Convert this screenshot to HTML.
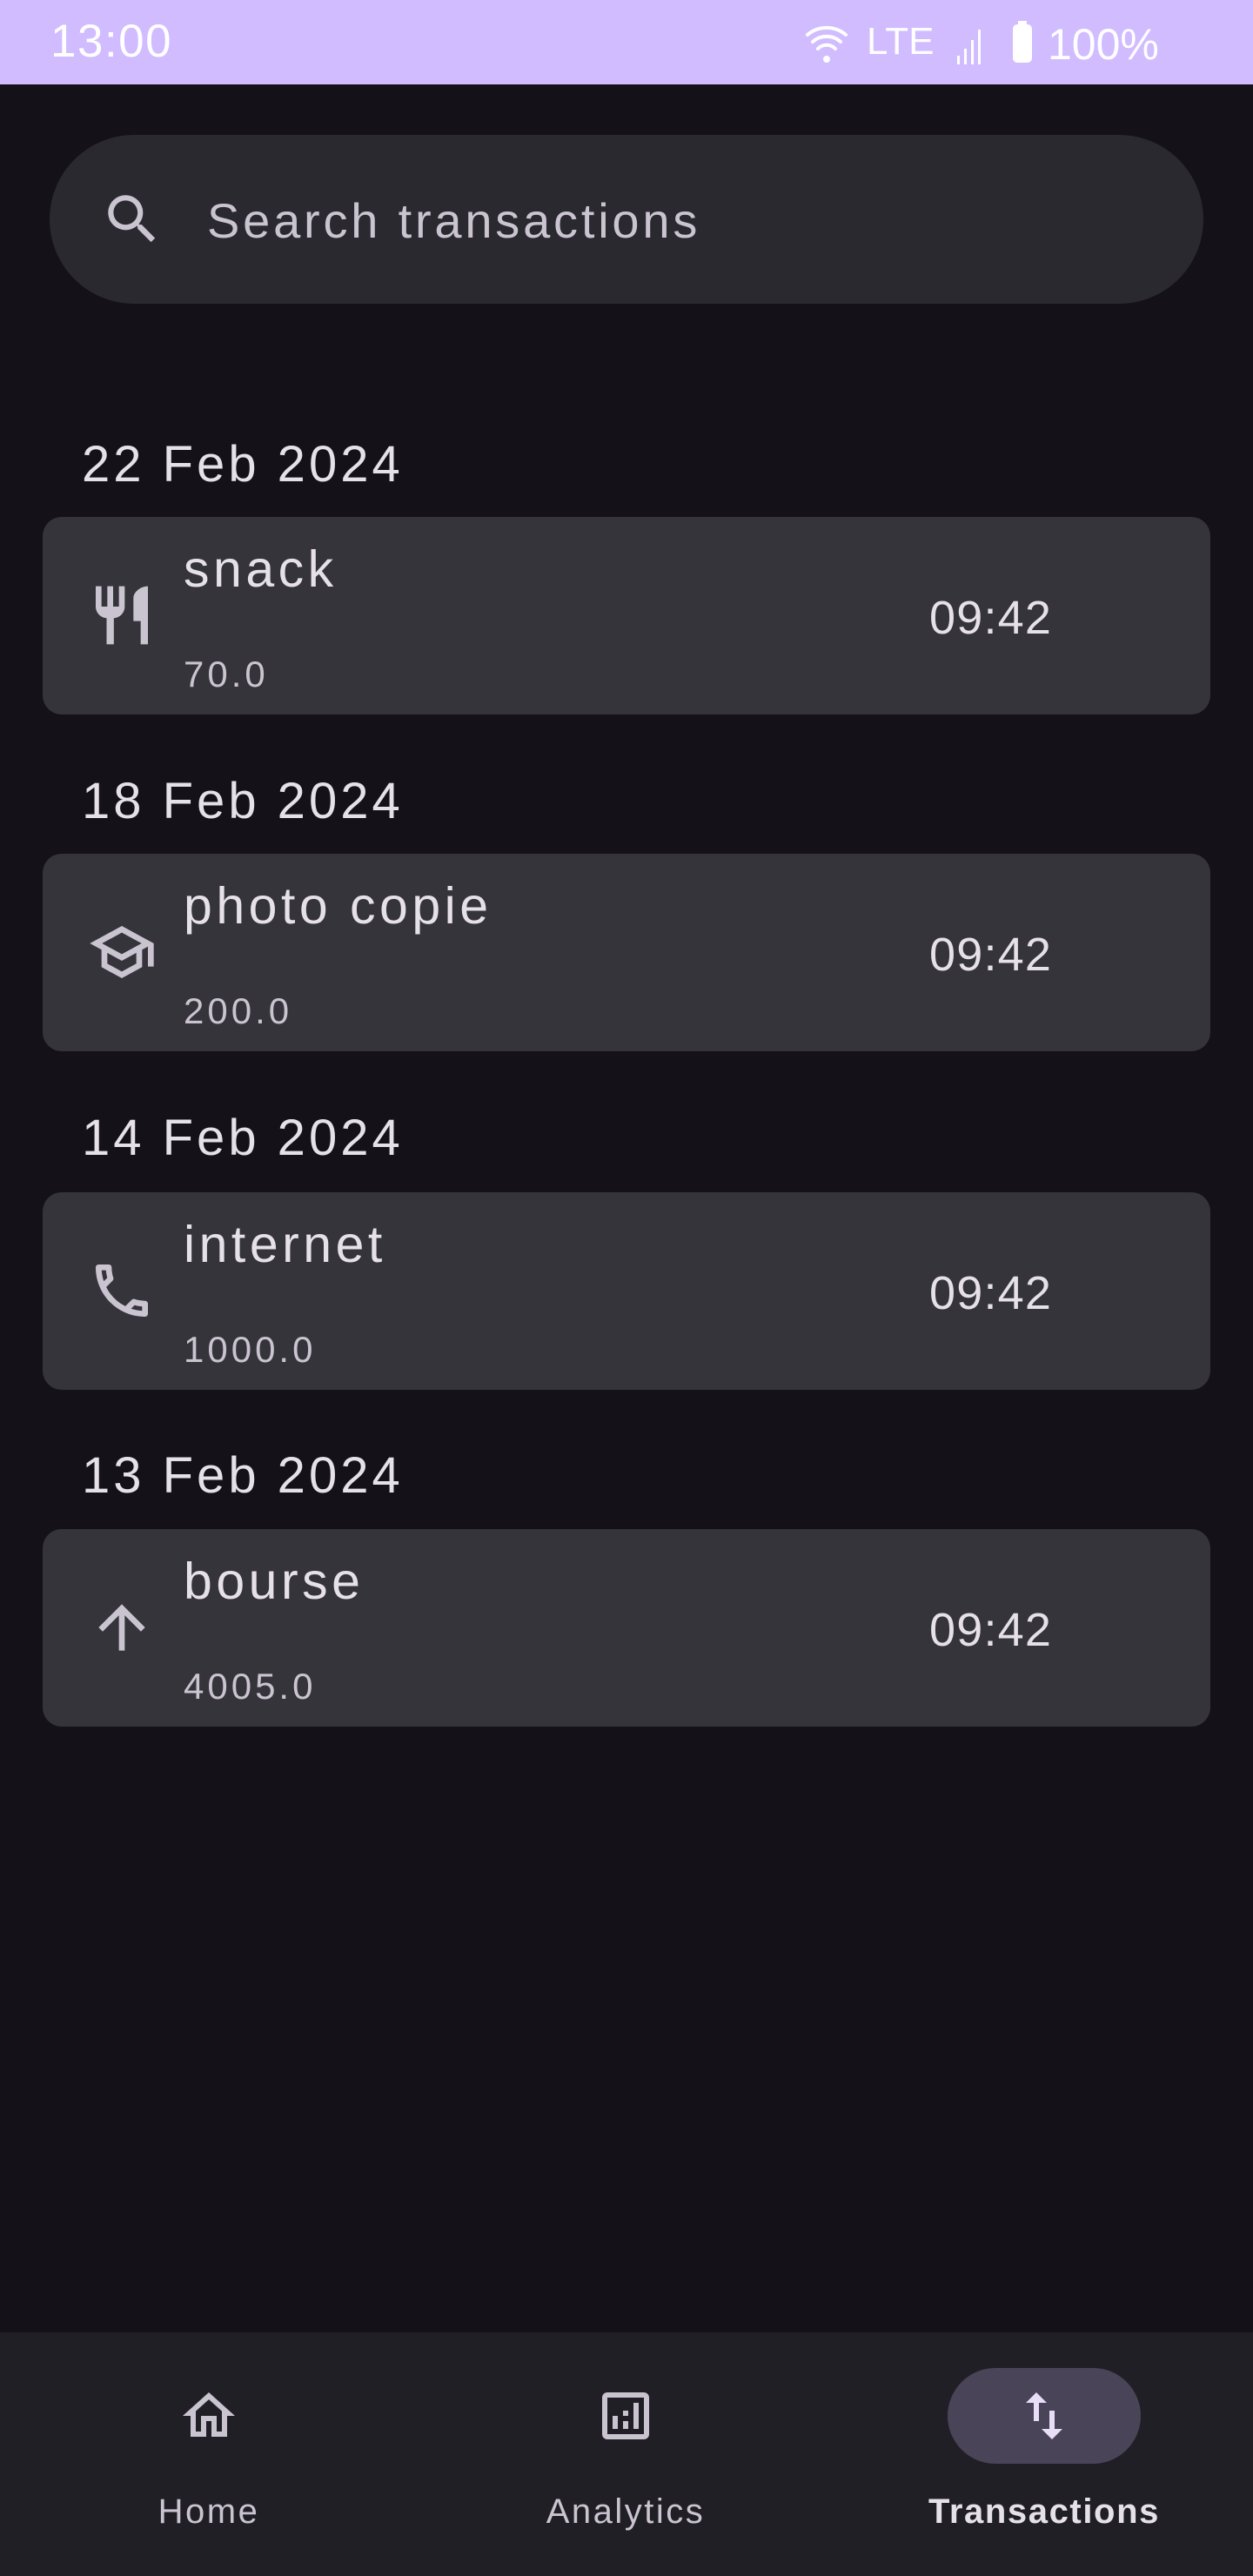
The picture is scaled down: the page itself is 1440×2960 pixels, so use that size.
<!DOCTYPE html>
<html><head><meta charset="utf-8"><style>
*{margin:0;padding:0;box-sizing:border-box}
body{width:1440px;height:2960px;background:#141218;font-family:"Liberation Sans",Roboto,sans-serif;position:relative;overflow:hidden;color:#e6e0e9}
.abs{position:absolute}
.status{left:0;top:0;width:1440px;height:97px;background:#d0bcff}
.search{left:57px;top:155px;width:1326px;height:194px;border-radius:97px;background:#2b2930}
.date{left:94px;font-size:58px;line-height:58px;color:#e6e0e9;letter-spacing:4px}
.card{left:49px;width:1342px;height:227px;border-radius:22px;background:#36343b}
.title{position:absolute;left:162px;top:30px;font-size:59px;line-height:60px;color:#e6e0e9;letter-spacing:4.5px}
.amt{position:absolute;left:162px;top:158px;font-size:42px;line-height:46px;color:#cac4d0;letter-spacing:4px}
.time{position:absolute;left:1019px;top:88px;font-size:54px;line-height:56px;color:#e6e0e9;letter-spacing:1.2px}
.ic{position:absolute;left:51px;top:73px;width:80px;height:80px}
.nav{left:0;top:2680px;width:1440px;height:280px;background:#211f26}
.lbl{position:absolute;top:2862px;font-size:40px;line-height:48px;text-align:center;width:400px;color:#cac4d0;letter-spacing:2.5px}
</style></head><body>
<div class="abs status"></div>
<div class="abs" style="left:58px;top:18px;font-size:53px;line-height:60px;color:#fff;letter-spacing:1.5px">13:00</div>
<svg class="abs" style="left:920px;top:20px" width="430" height="60" viewBox="0 0 430 60">
 <g fill="none" stroke="#fff" stroke-width="4" stroke-linecap="round"><path d="M8 20a34 34 0 0 1 44 0"/><path d="M14 28a24 24 0 0 1 32 0"/><path d="M20 36a14 14 0 0 1 20 0"/></g>
 <circle cx="30" cy="48" r="4" fill="#fff"/>
 <text x="76" y="42" font-family="Liberation Sans" font-size="44" fill="#fff">LTE</text>
 <g fill="#fff"><rect x="180" y="44" width="3" height="10"/><rect x="188" y="36" width="3" height="18"/><rect x="196" y="26" width="3" height="28"/><rect x="204" y="14" width="3" height="40"/></g>
 <rect x="244" y="8" width="22" height="44" rx="5" fill="#fff"/><rect x="250" y="4" width="10" height="6" fill="#fff"/>
 <text x="284" y="48" font-family="Liberation Sans" font-size="50" fill="#fff">100%</text>
</svg>
<div class="abs search"></div>
<svg class="abs" style="left:115px;top:215px" width="74" height="74" viewBox="0 0 24 24"><path fill="#cac4d0" d="M15.5 14h-.79l-.28-.27A6.470 6.470 0 0 0 16 9.5 6.5 6.5 0 1 0 9.5 16c1.61 0 3.090-.59 4.230-1.57l.27.28v.79l5 4.990L20.490 19l-4.990-5zm-6 0C7.010 14 5 11.990 5 9.5S7.010 5 9.5 5 14 7.010 14 9.5 11.990 14 9.5 14z"/></svg>
<div class="abs" style="left:238px;top:222px;font-size:56px;line-height:64px;color:#cac4d0;letter-spacing:3.8px">Search transactions</div>

<div class="abs date" style="top:505px">22 Feb 2024</div>
<div class="abs card" style="top:594px">
 <svg class="ic" viewBox="0 0 24 24"><path fill="#cac4d0" d="M11 9H9V2H7v7H5V2H3v7c0 2.12 1.66 3.84 3.75 3.97V22h2.5v-9.03C11.34 12.84 13 11.12 13 9V2h-2v7zm5-3v8h2.5v8H21V2c-2.76 0-5 2.24-5 4z"/></svg>
 <div class="title">snack</div><div class="amt">70.0</div><div class="time">09:42</div></div>

<div class="abs date" style="top:892px">18 Feb 2024</div>
<div class="abs card" style="top:981px">
 <svg class="ic" viewBox="0 0 24 24"><path fill="#cac4d0" d="M12 3 1 9l4 2.18v6L12 21l7-3.82v-6l2-1.09V17h2V9L12 3zm6.82 6L12 12.72 5.18 9 12 5.28 18.82 9zM17 15.99l-5 2.73-5-2.73v-3.72L12 15l5-2.73v3.72z"/></svg>
 <div class="title">photo copie</div><div class="amt">200.0</div><div class="time">09:42</div></div>

<div class="abs date" style="top:1279px">14 Feb 2024</div>
<div class="abs card" style="top:1370px">
 <svg class="ic" viewBox="0 0 24 24"><path fill="#cac4d0" d="M6.54 5c.06.89.21 1.76.45 2.59l-1.2 1.2c-.41-1.2-.67-2.47-.76-3.79h1.51m9.86 12.020c.85.24 1.72.39 2.6.45v1.49c-1.32-.09-2.59-.35-3.8-.75l1.2-1.19M7.5 3H4c-.55 0-1 .45-1 1 0 9.39 7.61 17 17 17 .55 0 1-.45 1-1v-3.49c0-.55-.45-1-1-1-1.24 0-2.45-.2-3.57-.57a.84.84 0 0 0-.31-.05c-.26 0-.51.1-.71.29l-2.2 2.2a15.149 15.149 0 0 1-6.59-6.59l2.2-2.2c.28-.28.36-.67.25-1.020A11.360 11.360 0 0 1 8.5 4c0-.55-.45-1-1-1z"/></svg>
 <div class="title">internet</div><div class="amt">1000.0</div><div class="time">09:42</div></div>

<div class="abs date" style="top:1667px">13 Feb 2024</div>
<div class="abs card" style="top:1757px">
 <svg class="ic" viewBox="0 0 24 24"><path fill="#cac4d0" d="m4 12 1.41 1.41L11 7.83V20h2V7.83l5.58 5.59L20 12l-8-8-8 8z"/></svg>
 <div class="title">bourse</div><div class="amt">4005.0</div><div class="time">09:42</div></div>

<div class="abs nav"></div>
<svg class="abs" style="left:204px;top:2740px" width="72" height="72" viewBox="0 0 24 24"><path fill="#cac4d0" d="m12 5.69 5 4.5V18h-2v-6H9v6H7v-7.81l5-4.5M12 3 2 12h3v8h6v-6h2v6h6v-8h3L12 3z"/></svg>
<svg class="abs" style="left:683px;top:2740px" width="72" height="72" viewBox="0 0 24 24"><path fill="#cac4d0" d="M19 3H5c-1.1 0-2 .9-2 2v14c0 1.1.9 2 2 2h14c1.1 0 2-.9 2-2V5c0-1.1-.9-2-2-2zm0 16H5V5h14v14zM7 12h2v5H7zm8-5h2v10h-2zm-4 7h2v3h-2zm0-4h2v2h-2z"/></svg>
<div class="abs" style="left:1089px;top:2721px;width:222px;height:110px;border-radius:55px;background:#4a4458"></div>
<svg class="abs" style="left:1164px;top:2740px" width="72" height="72" viewBox="0 0 24 24"><path fill="#e8def8" d="M16 17.01V10h-2v7.01h-3L15 21l4-3.99h-3zM9 3 5 6.99h3V14h2V6.99h3L9 3z"/></svg>
<div class="lbl" style="left:40px">Home</div>
<div class="lbl" style="left:519px">Analytics</div>
<div class="lbl" style="left:1000px;font-weight:bold;color:#e6e0e9;letter-spacing:1.6px">Transactions</div>
</body></html>
